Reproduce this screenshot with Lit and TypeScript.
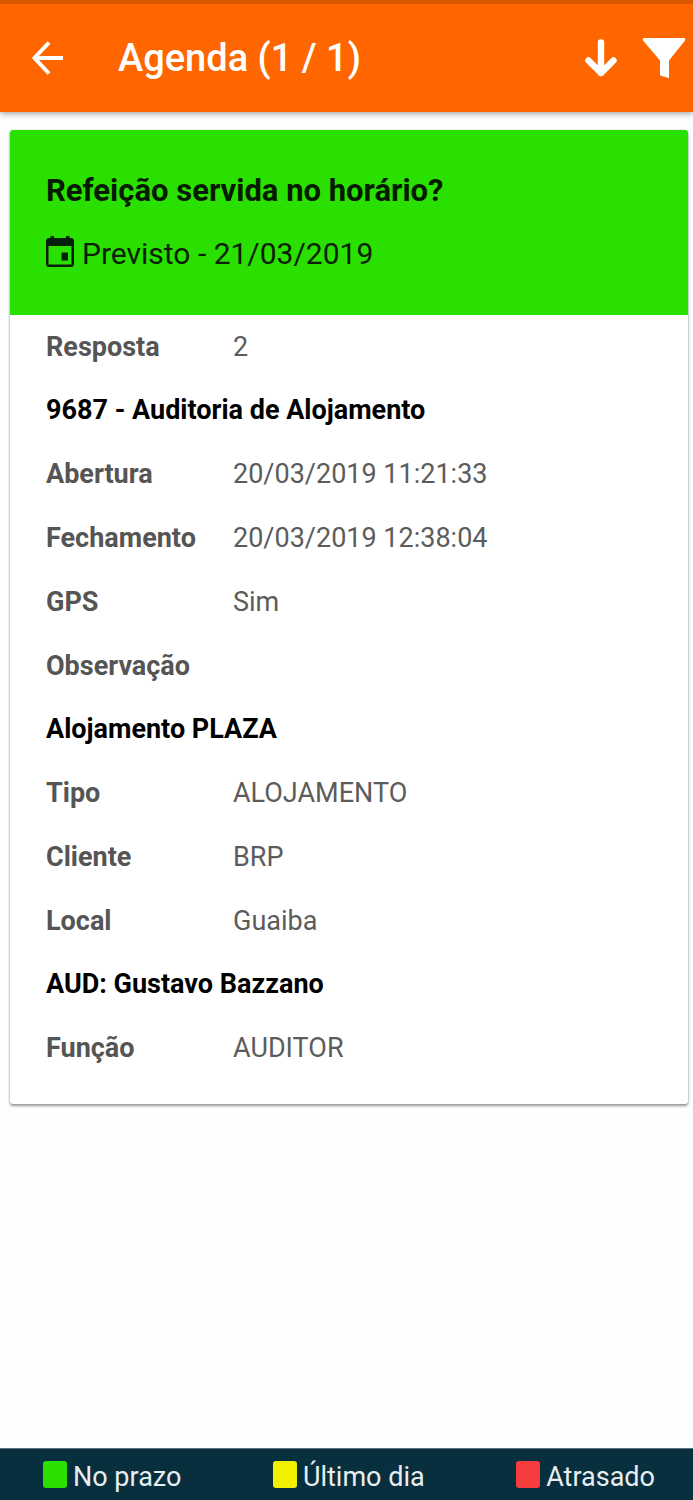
import { LitElement, html, css, svg } from "lit";
import { customElement, property } from "lit/decorators.js";

interface Field {
  label: string;
  value: string;
}

interface Section {
  title?: string;
  fields: Field[];
}

const SECTIONS: Section[] = [
  { fields: [{ label: "Resposta", value: "2" }] },
  {
    title: "9687 - Auditoria de Alojamento",
    fields: [
      { label: "Abertura", value: "20/03/2019 11:21:33" },
      { label: "Fechamento", value: "20/03/2019 12:38:04" },
      { label: "GPS", value: "Sim" },
      { label: "Observação", value: "" },
    ],
  },
  {
    title: "Alojamento PLAZA",
    fields: [
      { label: "Tipo", value: "ALOJAMENTO" },
      { label: "Cliente", value: "BRP" },
      { label: "Local", value: "Guaiba" },
    ],
  },
  {
    title: "AUD: Gustavo Bazzano",
    fields: [{ label: "Função", value: "AUDITOR" }],
  },
];

const backIcon = svg`<svg class="icon" width="32" height="36" viewBox="0 0 32 36" aria-hidden="true">
  <path d="M31 18H3M17 2.500L2.500 18L17 33.500" fill="none" stroke="currentColor" stroke-width="4"/></svg>`;

const downIcon = svg`<svg class="icon" width="34" height="40" viewBox="0 0 34 40" aria-hidden="true">
  <path d="M17 4.500V35M4.500 22.500L17 35L29.500 22.500" fill="none" stroke="currentColor" stroke-width="6.400" stroke-linecap="round" stroke-linejoin="round"/></svg>`;

const filterIcon = svg`<svg class="icon" width="44" height="42" viewBox="0 0 44 42" aria-hidden="true">
  <path d="M2 1H42Q44 1 43 3.500L27 23.500V41L18 38.500V23.500L1 3.500Q0 1 2 1Z" fill="currentColor"/></svg>`;

const calendarIcon = svg`<svg class="icon" width="28" height="31" viewBox="0 0 28 31" aria-hidden="true">
  <path fill-rule="evenodd" fill="currentColor" d="M4.500 0H8V2H20V0H23.500V2H25Q28 2 28 5V28Q28 31 25 31H3Q0 31 0 28V5Q0 2 3 2H4.500ZM2.500 10V28.500H25.500V10Z"/>
  <path fill="currentColor" d="M15.500 16.500H22V24.500H15.500Z"/></svg>`;

@customElement("agenda-header")
export class AgendaHeader extends LitElement {
  @property() heading = "";

  static styles = css`
    :host {
      display: block;
      position: relative;
    }
    .bar {
      display: flex;
      align-items: center;
      box-sizing: border-box;
      height: 112px;
      padding: 0 7px 0 32px;
      border-top: 4px solid #da5900;
      background: #ff6600;
      color: #fff;
      box-shadow: 0 2px 6px rgba(0, 0, 0, 0.35);
    }
    .title {
      flex: 1;
      margin: 0 0 0 54px;
      font-size: 38px;
      font-weight: 500;
      line-height: 48px;
    }
    .action {
      display: flex;
      padding: 0;
      border: 0;
      background: none;
      color: inherit;
      cursor: pointer;
    }
    .action + .action {
      margin-left: 24px;
    }
    .icon {
      display: block;
    }
  `;

  render() {
    return html`<header class="bar">
      <button class="action" type="button" aria-label="Voltar">${backIcon}</button>
      <h1 class="title">${this.heading}</h1>
      <button class="action" type="button" aria-label="Ordenar">${downIcon}</button>
      <button class="action" type="button" aria-label="Filtrar">${filterIcon}</button>
    </header>`;
  }
}

@customElement("agenda-card")
export class AgendaCard extends LitElement {
  @property({ attribute: false }) sections: Section[] = [];

  static styles = css`
    :host {
      display: block;
    }
    .card {
      overflow: hidden;
      padding-bottom: 24px;
      border-radius: 3px;
      background: #fff;
      box-shadow: 0 2px 3px rgba(0, 0, 0, 0.4), 0 0 2px rgba(0, 0, 0, 0.15);
    }
    .summary {
      padding: 40px 36px;
      background: #2ae000;
      color: #0a1f06;
    }
    .question {
      margin: 0 0 20px;
      color: #061a02;
      font-size: 31px;
      font-weight: 700;
      line-height: 42px;
    }
    .due {
      display: flex;
      align-items: center;
      gap: 8px;
      margin: 0;
      font-size: 30px;
      line-height: 43px;
    }
    .due .icon {
      flex: none;
      margin-bottom: 5px;
      color: #04200a;
    }
    .title {
      margin: 0;
      padding: 0 36px;
      color: #000;
      font-size: 27px;
      font-weight: 700;
      line-height: 63px;
    }
    .fields {
      margin: 0;
      padding: 0 36px;
    }
    .field {
      display: grid;
      grid-template-columns: 187px 1fr;
      color: #5c5c5c;
      font-size: 27px;
      line-height: 64px;
    }
    .label {
      color: #555;
      font-weight: 700;
    }
    .value {
      margin: 0;
    }
  `;

  render() {
    return html`<article class="card">
      <div class="summary">
        <h2 class="question">Refeição servida no horário?</h2>
        <p class="due">${calendarIcon}<span>Previsto - 21/03/2019</span></p>
      </div>
      ${this.sections.map(
        (s) => html`${s.title ? html`<h3 class="title">${s.title}</h3>` : ""}
          <dl class="fields">
            ${s.fields.map(
              (f) => html`<div class="field">
                <dt class="label">${f.label}</dt>
                <dd class="value">${f.value}</dd>
              </div>`
            )}
          </dl>`
      )}
    </article>`;
  }
}

@customElement("agenda-legend")
export class AgendaLegend extends LitElement {
  static styles = css`
    :host {
      display: block;
    }
    .legend {
      display: flex;
      justify-content: space-between;
      margin: 0;
      padding: 6px 38px 0 43px;
      border-top: 1px solid #5b747c;
      background: #082f3d;
      color: #e8eef0;
      font-size: 27px;
      line-height: 45px;
      list-style: none;
    }
    .item {
      display: flex;
      gap: 6px;
    }
    .swatch {
      width: 24px;
      height: 27px;
      margin-top: 6px;
      border-radius: 3px;
    }
    .ontime {
      background: #2ae000;
    }
    .lastday {
      background: #f0f000;
    }
    .late {
      background: #f73e3e;
    }
  `;

  render() {
    return html`<ul class="legend">
      <li class="item"><span class="swatch ontime"></span>No prazo</li>
      <li class="item"><span class="swatch lastday"></span>Último dia</li>
      <li class="item"><span class="swatch late"></span>Atrasado</li>
    </ul>`;
  }
}

@customElement("app-root")
export class AppRoot extends LitElement {
  static styles = css`
    :host {
      display: flex;
      flex-direction: column;
      min-height: 100vh;
      background: #fefefe;
      font-family: Roboto, "Liberation Sans", sans-serif;
    }
    .content {
      flex: 1;
      padding: 18px 5px 18px 10px;
    }
  `;

  render() {
    return html`
      <agenda-header heading="Agenda (1 / 1)"></agenda-header>
      <main class="content">
        <agenda-card .sections=${SECTIONS}></agenda-card>
      </main>
      <agenda-legend></agenda-legend>
    `;
  }
}
